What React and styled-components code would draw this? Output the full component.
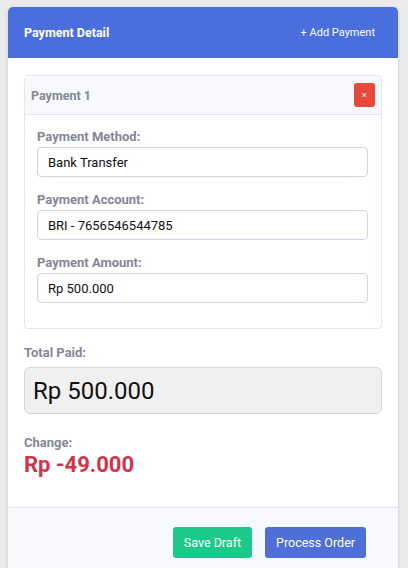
import React from 'react';
import styled, { createGlobalStyle } from 'styled-components';

const GlobalStyle = createGlobalStyle`
  body {
    margin: 0;
    background: #ebebeb;
    font-family: Roboto, 'Noto Sans', Arial, sans-serif;
  }
`;

const Page = styled.div`
  padding: 7px 10px 0 8px;
  height: 568px;
  box-sizing: border-box;
  overflow: hidden;
`;

const Card = styled.div`
  background: #fff;
  border-radius: 5px 5px 0 0;
  box-shadow: 0 1px 4px rgba(0, 0, 0, 0.12);
  display: flex;
  flex-direction: column;
`;

const Header = styled.div`
  background: #4a6fdc;
  border-radius: 5px 5px 0 0;
  height: 51px;
  display: flex;
  align-items: center;
  justify-content: space-between;
  padding: 0 23px 0 16px;
  color: #fff;
`;

const Title = styled.h2`
  margin: 0;
  font-size: 12.5px;
  font-weight: 700;
`;

const AddButton = styled.button`
  background: none;
  border: none;
  color: #fff;
  font-family: inherit;
  font-size: 11px;
  padding: 0;
  cursor: pointer;
`;

const Body = styled.div`
  padding: 17px 16px 0;
`;

const PaymentBox = styled.div`
  border: 1px solid #e3e6f0;
  border-radius: 4px;
`;

const PaymentHead = styled.div`
  background: #f8f9fc;
  border-bottom: 1px solid #e3e6f0;
  height: 38px;
  display: flex;
  align-items: center;
  justify-content: space-between;
  padding: 0 6px;
`;

const PaymentTitle = styled.span`
  font-size: 12.5px;
  font-weight: 700;
  color: #858796;
`;

const RemoveButton = styled.button`
  width: 21px;
  height: 24px;
  background: #e74a3b;
  border: none;
  border-radius: 3px;
  color: #fff;
  font-size: 9px;
  padding: 0;
  font-family: inherit;
`;

const PaymentBody = styled.div`
  padding: 14px 13px 25px 12px;
  display: flex;
  flex-direction: column;
  gap: 15px;
`;

const Field = styled.div`
  display: flex;
  flex-direction: column;
  gap: 3px;
`;

const Label = styled.label`
  font-size: 13px;
  font-weight: 700;
  color: #858796;
  line-height: 15px;
`;

const Input = styled.div`
  height: 30px;
  box-sizing: border-box;
  border: 1px solid #d1d3e2;
  border-radius: 4px;
  padding: 0 10px;
  display: flex;
  align-items: center;
  font-size: 13px;
  color: #111;
`;

const Summary = styled.div`
  padding: 16px 0 0;
  display: flex;
  flex-direction: column;
`;

const TotalBox = styled.div`
  margin-top: 7px;
  height: 47px;
  box-sizing: border-box;
  background: #f0f0f0;
  border: 1px solid #d6d6d6;
  border-radius: 6px;
  display: flex;
  align-items: center;
  padding: 0 8px;
  font-size: 24px;
  color: #111;
`;

const ChangeLabel = styled(Label)`
  margin-top: 21px;
`;

const ChangeValue = styled.div`
  font-size: 22px;
  line-height: 26px;
  font-weight: 700;
  color: #d1344a;
  margin-top: 2px;
`;

const Footer = styled.div`
  margin-top: 29px;
  background: #f8f9fc;
  border-top: 1px solid #e3e6f0;
  height: 70px;
  display: flex;
  justify-content: flex-end;
  align-items: flex-start;
  gap: 13px;
  padding: 19px 32px 0 0;
`;

const ActionButton = styled.button`
  height: 31px;
  padding: 0 11px;
  border: none;
  border-radius: 3px;
  background: ${(p) => p.$bg};
  color: #fff;
  font-family: inherit;
  font-size: 12.5px;
`;

const fields = [
  ['Payment Method:', 'Bank Transfer'],
  ['Payment Account:', 'BRI - 7656546544785'],
  ['Payment Amount:', 'Rp 500.000'],
];

const App = () => (
  <>
    <GlobalStyle />
    <Page>
      <Card>
        <Header>
          <Title>Payment Detail</Title>
          <AddButton>+ Add Payment</AddButton>
        </Header>
        <Body>
          <PaymentBox>
            <PaymentHead>
              <PaymentTitle>Payment 1</PaymentTitle>
              <RemoveButton>×</RemoveButton>
            </PaymentHead>
            <PaymentBody>
              {fields.map(([label, value]) => (
                <Field key={label}>
                  <Label>{label}</Label>
                  <Input>{value}</Input>
                </Field>
              ))}
            </PaymentBody>
          </PaymentBox>
          <Summary>
            <Label>Total Paid:</Label>
            <TotalBox>Rp 500.000</TotalBox>
            <ChangeLabel>Change:</ChangeLabel>
            <ChangeValue>Rp -49.000</ChangeValue>
          </Summary>
        </Body>
        <Footer>
          <ActionButton $bg="#1cc88a">Save Draft</ActionButton>
          <ActionButton $bg="#4e6fd8">Process Order</ActionButton>
        </Footer>
      </Card>
    </Page>
  </>
);

export default App;
